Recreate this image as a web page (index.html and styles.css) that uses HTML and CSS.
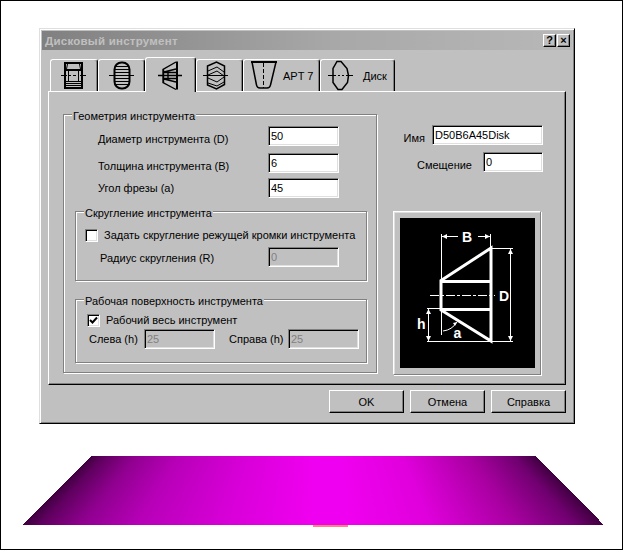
FILE: index.html
```html
<!DOCTYPE html>
<html lang="ru">
<head>
<meta charset="utf-8">
<title>Дисковый инструмент</title>
<link rel="stylesheet" href="styles.css">
</head>
<body>
<div class="page">
  <div class="dialog">
    <div class="titlebar">
      <span class="title">Дисковый инструмент</span>
      <span class="caps">?</span>
      <span class="caps close">×</span>
    </div>
    <div class="tabs">
      <div class="tab t1">
        <svg class="ico" width="28" height="31" viewBox="60 61 28 31">
          <g fill="none" stroke="#000">
            <path d="M64.500 63v27M82.500 63v27M65.500 63v27M81.500 63v27M61 76.500h6M80 76.500h6" />
            <path d="M64 63.500h19M64 64.500h19M65 70.500h17M65 71.500h17M67.500 65l-1 5M79.500 65l1 5M65 82.500h17M65 84.500h17M65 86.500h17M65 88.500h17M65 89.500h17M68.500 71v11M78.500 71v11"/>
            <path d="M68 76.500h11" stroke-dasharray="3 2"/>
          </g>
        </svg>
      </div>
      <div class="tab t2">
        <svg class="ico" width="28" height="31" viewBox="108 61 28 31">
          <g fill="none" stroke="#000">
            <rect x="114.500" y="63.500" width="15" height="26" rx="7" stroke-width="2"/>
            <path d="M109 76.500h25M115 67.500h14M114 70.500h16M114 73.500h16M114 79.500h16M114 82.500h16M115 85.500h14"/>
          </g>
        </svg>
      </div>
      <div class="tab t3 active">
        <svg class="ico" width="28" height="31" viewBox="156 59 28 31">
          <g fill="none" stroke="#000">
            <path d="M176.500 60.500v28M177.500 60.500v28" />
            <path d="M176 61l-13 7.500v13l13 7M163.500 68v14M158 74.500h24M164 71l12-3M164 78l12 3M164 71.500h12M164 77.500h12M168 70v9" stroke-width="1.400"/>
          </g>
        </svg>
      </div>
      <div class="tab t4">
        <svg class="ico" width="28" height="31" viewBox="202 61 28 31">
          <g fill="none" stroke="#000">
            <path d="M207.500 67l9-4 8 4v18.500l-8 4.500-9-4z" stroke-width="1.500"/>
            <path d="M208 72l9-4 7 5M208 76l9-4 7 5M208 79l9 4 7-5M208 84l9 3 7-4M203 76.500h25"/>
          </g>
        </svg>
      </div>
      <div class="tab t5">
        <svg class="ico" width="28" height="31" viewBox="250 61 28 31">
          <g fill="none" stroke="#000">
            <path d="M251 63h26" stroke-width="2"/>
            <path d="M252 63l4.500 23q.5 3 3.500 3h7q3 0 3.500-3l5.500-23" stroke-width="1.500"/>
            <path d="M263.500 64v25" stroke-dasharray="4 2"/>
          </g>
        </svg>
        <span class="tab-text">APT 7</span>
      </div>
      <div class="tab t6">
        <svg class="ico" width="28" height="31" viewBox="327 61 28 31">
          <g fill="none" stroke="#000">
            <path d="M337 62.500h4l6 7 1.500 7-1 7-5.500 7h-4l-5-7v-14z" stroke-width="1.500"/>
            <path d="M328 76.500h6M347 76.500h6"/>
            <path d="M334 76.500h13" stroke-dasharray="2 2"/>
          </g>
        </svg>
        <span class="tab-text">Диск</span>
      </div>
    </div>

    <div class="pane">
      <div class="group geometry">
        <span class="legend">Геометрия инструмента</span>
        <div class="row row-first"><label class="lbl lbl-geo drop">Диаметр инструмента (D)</label><input class="field" value="50"></div>
        <div class="row row-b"><label class="lbl lbl-geo drop">Толщина инструмента (B)</label><input class="field" value="6"></div>
        <div class="row row-c"><label class="lbl lbl-geo">Угол фрезы (a)</label><input class="field" value="45"></div>

        <div class="group rounding">
          <span class="legend">Скругление инструмента</span>
          <div class="check-row"><span class="check"></span><span class="check-text">Задать скругление режущей кромки инструмента</span></div>
          <div class="row row-r"><label class="lbl lbl-r">Радиус скругления (R)</label><input class="field off" value="0" disabled></div>
        </div>

        <div class="group surface">
          <span class="legend">Рабочая поверхность инструмента</span>
          <div class="check-row check-row-s">
            <span class="check">
              <svg width="9" height="9" viewBox="0 0 9 9"><path d="M1 4l2.500 2.500L8 1.500" fill="none" stroke="#000" stroke-width="2"/></svg>
            </span>
            <span class="check-text">Рабочий весь инструмент</span>
          </div>
          <div class="row row-h">
            <label class="lbl lbl-left">Слева (h)</label><input class="field off" value="25" disabled>
            <label class="lbl lbl-right">Справа (h)</label><input class="field off" value="25" disabled>
          </div>
        </div>
      </div>

      <div class="side">
        <div class="row side-row"><label class="lbl drop">Имя</label><input class="field name" value="D50B6A45Disk"></div>
        <div class="row side-row"><label class="lbl drop lbl-shift">Смещение</label><input class="field shift" value="0"></div>
        <div class="frame">
          <svg class="diagram" width="135" height="150" viewBox="400 218 135 150">
            <g fill="none" stroke="#fff">
              <path d="M491 248L441 280.500V310L491 341Z" stroke-width="3"/>
              <path d="M441 281.500H491M441 309.500H491" stroke-width="3"/>
              <path d="M430 295.500H495" stroke-dasharray="9 2 3 2"/>
              <path d="M441.500 234V280M490.500 234V248M442 236.500H458M478 236.500H490"/>
              <path d="M491 248.500H513M491 341.500H513M510.500 249V341"/>
              <path d="M427 308.500H440M427 341.500H490M428.500 309V341"/>
              <path d="M441.500 311V335M443 331Q452 330 457 322"/>
            </g>
            <g fill="#fff">
              <path d="M442 236.500l5-2.500v5zM490 236.500l-5-2.500v5zM510.500 249l-2.500 5h5zM510.500 341l-2.500-5h5zM428.500 309l-2.500 5h5zM428.500 341l-2.500-5h5zM457 322l-4 1 2 3z"/>
              <text class="dim" x="462" y="242">B</text>
              <text class="dim" x="499" y="301">D</text>
              <text class="dim" x="417" y="329">h</text>
              <text class="dim" x="453.500" y="338">a</text>
            </g>
          </svg>
        </div>
      </div>
    </div>

    <div class="actions">
      <button class="btn">OK</button>
      <button class="btn">Отмена</button>
      <button class="btn">Справка</button>
    </div>
  </div>
  <div class="cone"></div>
  <div class="cone-foot"></div>
</div>
</body>
</html>
```

FILE: styles.css
```css
* { box-sizing: border-box; }
html, body { margin: 0; padding: 0; background: #fff; }
body { width: 623px; height: 550px; overflow: hidden; }

.page {
  width: 623px;
  height: 550px;
  border: 1px solid #000;
  padding-top: 27px;
  font: 11px/14px "Liberation Sans", Arial, sans-serif;
  color: #000;
}

.dialog {
  width: 536px;
  height: 396px;
  margin-left: 38px;
  padding: 2px;
  background: #c0c0c0;
  border: 1px solid;
  border-color: #dfdfdf #000 #000 #dfdfdf;
  box-shadow: inset 1px 1px 0 #fff, inset -1px -1px 0 #808080;
}

.titlebar {
  height: 19px;
  display: flex;
  align-items: center;
  padding: 0 2px 0 3px;
  background: linear-gradient(90deg, #808080, #a8a8a8 55%, #b8b8b8);
  color: #c0c0c0;
}
.title { flex: 1; font-size: 11.5px; font-weight: bold; letter-spacing: 0.25px; }
.caps {
  width: 13px;
  height: 13px;
  background: #c0c0c0;
  border: 1px solid;
  border-color: #fff #000 #000 #fff;
  box-shadow: inset -1px -1px 0 #808080;
  color: #000;
  font: bold 11px/11px "Liberation Sans", Arial, sans-serif;
  text-align: center;
}
.close { margin-left: 1px; }

.tabs {
  height: 42px;
  margin-left: 8px;
  display: flex;
  align-items: flex-end;
  position: relative;
  z-index: 1;
  margin-bottom: -1px;
  padding-bottom: 1px;
}
.tab {
  height: 32px;
  display: flex;
  align-items: center;
  background: #c0c0c0;
  border: 1px solid;
  border-color: #fff #000 transparent #fff;
  border-bottom: 0;
  border-radius: 3px 3px 0 0;
  box-shadow: inset -1px 0 0 #808080;
}
.ico { display: block; flex: none; }
.t1 { width: 48px; padding-left: 9px; }
.t2 { width: 47px; padding-left: 9px; }
.t3 { width: 51px; padding-left: 10px; }
.t4 { width: 47px; padding-left: 5px; }
.t5 { width: 77px; padding-left: 6px; }
.t6 { width: 75px; padding-left: 6px; }
.active { height: 35px; margin-bottom: -1px; }
.tab-text { margin-left: 5px; }
.t6 .tab-text { margin-left: 8px; }

.pane {
  width: 518px;
  height: 294px;
  margin-left: 6px;
  padding: 22px 0 0 14px;
  display: flex;
  align-items: flex-start;
  border: 1px solid;
  border-color: #fff #000 #000 #fff;
  box-shadow: inset -1px -1px 0 #808080;
}

.group {
  position: relative;
  border: 1px solid #808080;
  box-shadow: 1px 1px 0 #fff, inset 1px 1px 0 #fff;
}
.legend {
  position: absolute;
  top: -6px;
  left: 8px;
  padding: 0 1px;
  background: #c0c0c0;
  white-space: nowrap;
}
.geometry { width: 314px; height: 259px; padding: 11px 0 0 11px; }
.rounding { width: 292px; height: 70px; margin-top: 13px; }
.surface { width: 292px; height: 64px; margin-top: 18px; }

.row { display: flex; align-items: center; }
.row-b { margin-top: 7px; }
.row-c { margin-top: 5px; }
.lbl { display: block; white-space: nowrap; }
.drop { padding-top: 5px; }
.lbl-geo { width: 193px; padding-left: 23px; }
.lbl-r { width: 192px; padding-left: 24px; padding-top: 2px; }
.lbl-left { width: 68px; padding-left: 13px; }
.lbl-right { width: 73px; padding-left: 14px; }
.lbl-shift { margin-right: 11px; }

.field {
  display: block;
  width: 71px;
  height: 20px;
  margin: 0;
  padding: 0 0 0 2px;
  background: #fff;
  color: #000;
  font: inherit;
  border: 1px solid;
  border-color: #808080 #fff #fff #808080;
  box-shadow: inset 1px 1px 0 #000, inset -1px -1px 0 #dfdfdf;
  border-radius: 0;
  outline: 0;
}
.off { background: #c0c0c0; color: #808080; }

.check-row { display: flex; align-items: center; gap: 6px; padding: 16px 0 0 9px; }
.check-row-s { padding: 13px 0 0 11px; gap: 6px; }
.check-text { white-space: nowrap; }
.check {
  width: 13px;
  height: 13px;
  display: flex;
  align-items: center;
  justify-content: center;
  background: #fff;
  border: 1px solid;
  border-color: #808080 #fff #fff #808080;
  box-shadow: inset 1px 1px 0 #000, inset -1px -1px 0 #dfdfdf;
  flex: none;
}
.row-r { margin-top: 5px; }
.row-h { margin-top: 2px; }

.side {
  width: 152px;
  margin-left: 14px;
  margin-top: 11px;
  display: flex;
  flex-direction: column;
  align-items: flex-end;
}
.side-row { margin-bottom: 7px; }
.name { width: 111px; margin-left: 7px; }
.shift { width: 60px; }
.frame {
  width: 148px;
  height: 164px;
  margin: 32px 2px 0 0;
  padding: 6px;
  border: 1px solid #808080;
  border-color: #fff #808080 #808080 #fff;
  box-shadow: inset 1px 1px 0 #dfdfdf, 1px 1px 0 #fff;
}
.diagram { display: block; background: #000; }
.dim { font: bold 14px "Liberation Sans", Arial, sans-serif; stroke: none; }

.actions {
  display: flex;
  justify-content: flex-end;
  gap: 6px;
  margin-top: 5px;
  padding-right: 6px;
}
.btn {
  width: 75px;
  height: 23px;
  margin: 0;
  padding: 0;
  background: #c0c0c0;
  color: #000;
  font: inherit;
  border: 1px solid;
  border-color: #fff #000 #000 #fff;
  box-shadow: inset -1px -1px 0 #808080;
  border-radius: 0;
}

.cone {
  width: 581px;
  height: 69px;
  margin: 32px 0 0 22px;
  transform-origin: 0 0;
  transform: matrix3d(1,0,0,0, -1.2971,1,0,-0.004472, 0,0,1,0, 89.5,0,0,1.3086);
  background: linear-gradient(90deg, #400040, #600060 3%, #900090 10%, #b800b8 20%, #d800d8 35%, #f000f0 50%, #f000f0 56%, #e000dc 70%, #a800a0 85%, #700070 95%, #400040);
}
.cone-foot {
  width: 35px;
  height: 2px;
  margin-left: 312px;
  background: #ff8080;
}
```
